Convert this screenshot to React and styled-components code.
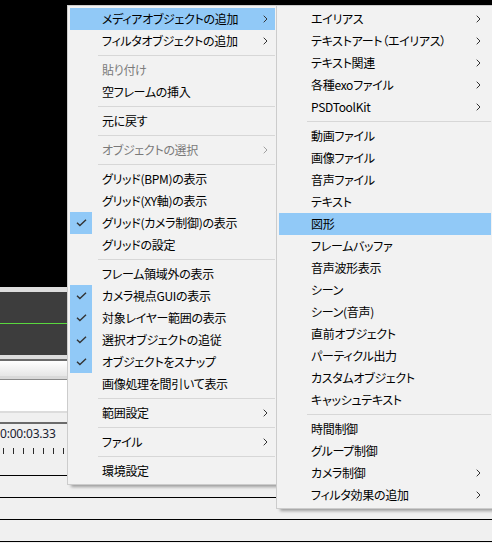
import React from 'react';
import styled, { createGlobalStyle } from 'styled-components';

const GlobalStyle = createGlobalStyle`
  html, body {
    margin: 0;
    padding: 0;
    background: #f0f0f0;
  }
  body {
    font-family: 'Noto Sans CJK JP', 'Noto Sans', sans-serif;
  }
`;

// 背景になる編集画面
const Screen = styled.div`
  position: relative;
  width: 492px;
  height: 543px;
  overflow: hidden;
  background: #f0f0f0;
  display: flex;
  flex-direction: column;
`;

const Preview = styled.div`
  flex: none;
  height: 287px;
  background: #000;
`;

const Splitter = styled.div`
  flex: none;
  height: 5px;
  background: #dddddd;
`;

const LayerPanel = styled.div`
  flex: none;
  display: flex;
  flex-direction: column;
  background: #3d3d3d;
`;

const LayerRow = styled.div`
  height: 31px;
  border-bottom: ${p => (p.$marked ? '1px solid #5ad83f' : 'none')};
`;

const ToolStrip = styled.div`
  flex: none;
  display: flex;
  flex-direction: column;
  border-top: 4px solid #dcdcdc;
`;

const ScrollBar = styled.div`
  height: 15px;
  border-top: 2px solid #6b6b6b;
  background: linear-gradient(#ffffff, #e6e6e6);
  border-bottom: 3px solid #d9d9d9;
`;

const HeaderBox = styled.div`
  height: 31px;
  background: #fff;
  border-top: 1px solid #8a8a8a;
  border-bottom: 2px solid #dcdcdc;
`;

const RulerGap = styled.div`
  height: 9px;
  border-bottom: 2px solid #6b6b6b;
`;

const Ruler = styled.div`
  flex: none;
  height: 51px;
  display: flex;
  flex-direction: column;
  overflow: hidden;
`;

const TimeCode = styled.div`
  height: 20px;
  padding-top: 1px;
  font-family: 'Noto Sans', sans-serif;
  font-size: 12px;
  line-height: 18px;
  color: #1b2230;
  letter-spacing: -0.2px;
`;

const Ticks = styled.div`
  margin-top: 3px;
  height: 6px;
  background: repeating-linear-gradient(
    to right,
    transparent 0 3px,
    #2a2a2a 3px 4px,
    transparent 4px 10px
  );
`;

const Track = styled.div`
  flex: none;
  height: 21px;
  border-top: 1px solid #000;
`;

// ポップアップメニュー
const Menu = styled.div`
  position: absolute;
  top: 5px;
  left: ${p => p.$left}px;
  width: ${p => p.$width}px;
  box-sizing: border-box;
  padding: 2px;
  background: #f2f2f2;
  border: 1px solid #cccccc;
  box-shadow: 3px 3px 3px -1px rgba(0, 0, 0, 0.35);
  z-index: ${p => p.$layer};
  font-family: 'Noto Sans CJK JP', 'Noto Sans', sans-serif;
  font-size: 12px;
  font-feature-settings: 'palt';
  letter-spacing: -0.3px;
`;

const Item = styled.div`
  display: flex;
  align-items: center;
  height: 22px;
  background: ${p => (p.$active ? '#91c9f7' : 'transparent')};
  color: ${p => (p.$disabled ? '#7a7a7a' : '#000')};
`;

const CheckBox = styled.span`
  flex: none;
  width: 22px;
  height: 22px;
  display: flex;
  align-items: center;
  justify-content: center;
  background: ${p => (p.$on ? '#91c9f7' : 'transparent')};
`;

const Label = styled.span`
  flex: 1;
  margin-left: 10px;
  white-space: nowrap;
  line-height: 22px;
`;

const ArrowBox = styled.span`
  flex: none;
  display: flex;
  align-items: center;
  margin-right: ${p => p.$gap}px;
`;

const Separator = styled.div`
  height: 7px;
  display: flex;
  align-items: center;
  padding-left: 28px;

  &::after {
    content: '';
    flex: 1;
    height: 1px;
    background: #d7d7d7;
  }
`;

const Check = () => (
  <svg width="11" height="8" viewBox="0 0 11 8">
    <path d="M1 3.8 L3.9 6.6 L10 0.8" fill="none" stroke="#333" strokeWidth="1.4" />
  </svg>
);

const Chevron = ({ color }) => (
  <svg width="5" height="8" viewBox="0 0 5 8">
    <path d="M0.7 0.7 L4 4 L0.7 7.3" fill="none" stroke={color} strokeWidth="1" />
  </svg>
);

const mainItems = [
  { label: 'メディアオブジェクトの追加', sub: true, active: true },
  { label: 'フィルタオブジェクトの追加', sub: true },
  '-',
  { label: '貼り付け', disabled: true },
  { label: '空フレームの挿入' },
  '-',
  { label: '元に戻す' },
  '-',
  { label: 'オブジェクトの選択', sub: true, disabled: true },
  '-',
  { label: 'グリッド(BPM)の表示' },
  { label: 'グリッド(XY軸)の表示' },
  { label: 'グリッド(カメラ制御)の表示', checked: true },
  { label: 'グリッドの設定' },
  '-',
  { label: 'フレーム領域外の表示' },
  { label: 'カメラ視点GUIの表示', checked: true },
  { label: '対象レイヤー範囲の表示', checked: true },
  { label: '選択オブジェクトの追従', checked: true },
  { label: 'オブジェクトをスナップ', checked: true },
  { label: '画像処理を間引いて表示' },
  '-',
  { label: '範囲設定', sub: true },
  '-',
  { label: 'ファイル', sub: true },
  '-',
  { label: '環境設定' },
];

const mediaItems = [
  { label: 'エイリアス', sub: true },
  { label: 'テキストアート（エイリアス）', sub: true },
  { label: 'テキスト関連', sub: true },
  { label: '各種exoファイル', sub: true },
  { label: 'PSDToolKit', sub: true },
  '-',
  { label: '動画ファイル' },
  { label: '画像ファイル' },
  { label: '音声ファイル' },
  { label: 'テキスト' },
  { label: '図形', active: true },
  { label: 'フレームバッファ' },
  { label: '音声波形表示' },
  { label: 'シーン' },
  { label: 'シーン(音声)' },
  { label: '直前オブジェクト' },
  { label: 'パーティクル出力' },
  { label: 'カスタムオブジェクト' },
  { label: 'キャッシュテキスト' },
  '-',
  { label: '時間制御' },
  { label: 'グループ制御' },
  { label: 'カメラ制御', sub: true },
  { label: 'フィルタ効果の追加', sub: true },
];

function MenuList({ items, arrowGap }) {
  return items.map((it, i) =>
    it === '-' ? (
      <Separator key={i} />
    ) : (
      <Item key={i} $active={it.active} $disabled={it.disabled}>
        <CheckBox $on={it.checked}>{it.checked && <Check />}</CheckBox>
        <Label>{it.label}</Label>
        {it.sub && (
          <ArrowBox $gap={arrowGap}>
            <Chevron color={it.disabled ? '#a0a0a0' : '#333'} />
          </ArrowBox>
        )}
      </Item>
    )
  );
}

export default function App() {
  return (
    <>
      <GlobalStyle />
      <Screen>
        <Preview />
        <Splitter />
        <LayerPanel>
          <LayerRow $marked />
          <LayerRow />
        </LayerPanel>
        <ToolStrip>
          <ScrollBar />
          <HeaderBox />
          <RulerGap />
        </ToolStrip>
        <Ruler>
          <TimeCode>0:00:03.33</TimeCode>
          <Ticks />
        </Ruler>
        <Track />
        <Track />
        <Track />
        <Track />

        <Menu $left={67} $width={211} $layer={1}>
          <MenuList items={mainItems} arrowGap={7} />
        </Menu>
        <Menu $left={276} $width={218} $layer={2}>
          <MenuList items={mediaItems} arrowGap={10} />
        </Menu>
      </Screen>
    </>
  );
}
